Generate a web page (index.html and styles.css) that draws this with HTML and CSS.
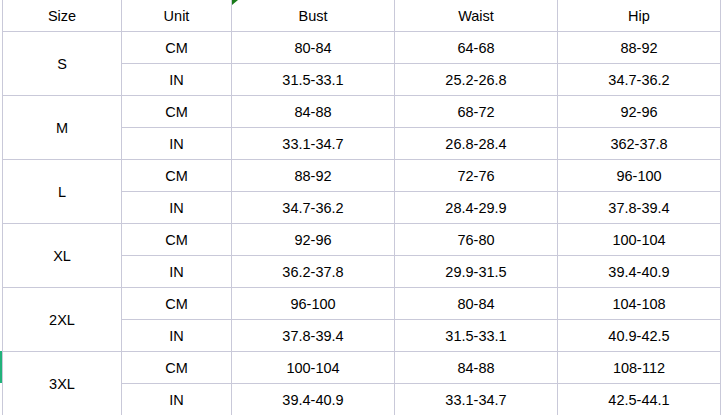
FILE: index.html
```html
<!DOCTYPE html>
<html>
<head>
<meta charset="utf-8">
<link rel="stylesheet" href="styles.css">
</head>
<body>
<div class="sheet">
  <div class="row-marker"></div>
  <table class="grid">
    <colgroup>
      <col class="c-size"><col class="c-unit"><col class="c-val"><col class="c-val"><col class="c-val">
    </colgroup>
    <tr class="head"><td>Size</td><td>Unit</td><td class="flagged">Bust<span class="flag"></span></td><td>Waist</td><td>Hip</td></tr>
    <tr><td rowspan="2">S</td><td>CM</td><td>80-84</td><td>64-68</td><td>88-92</td></tr>
    <tr><td>IN</td><td>31.5-33.1</td><td>25.2-26.8</td><td>34.7-36.2</td></tr>
    <tr><td rowspan="2">M</td><td>CM</td><td>84-88</td><td>68-72</td><td>92-96</td></tr>
    <tr><td>IN</td><td>33.1-34.7</td><td>26.8-28.4</td><td>362-37.8</td></tr>
    <tr><td rowspan="2">L</td><td>CM</td><td>88-92</td><td>72-76</td><td>96-100</td></tr>
    <tr><td>IN</td><td>34.7-36.2</td><td>28.4-29.9</td><td>37.8-39.4</td></tr>
    <tr><td rowspan="2">XL</td><td>CM</td><td>92-96</td><td>76-80</td><td>100-104</td></tr>
    <tr><td>IN</td><td>36.2-37.8</td><td>29.9-31.5</td><td>39.4-40.9</td></tr>
    <tr><td rowspan="2">2XL</td><td>CM</td><td>96-100</td><td>80-84</td><td>104-108</td></tr>
    <tr><td>IN</td><td>37.8-39.4</td><td>31.5-33.1</td><td>40.9-42.5</td></tr>
    <tr><td rowspan="2">3XL</td><td>CM</td><td>100-104</td><td>84-88</td><td>108-112</td></tr>
    <tr><td>IN</td><td>39.4-40.9</td><td>33.1-34.7</td><td>42.5-44.1</td></tr>
  </table>
</div>
</body>
</html>
```
FILE: styles.css
```css
html, body {
  margin: 0;
  padding: 0;
  background: #ffffff;
  overflow: hidden;
}
.sheet {
  position: relative;
  width: 721px;
  height: 415px;
  overflow: hidden;
  padding-left: 2px;
  box-sizing: border-box;
}
.row-marker {
  position: absolute;
  left: 0;
  top: 351px;
  width: 2px;
  height: 32px;
  background: #21b27a;
}
.grid {
  border-collapse: collapse;
  table-layout: fixed;
  width: 719px;
  margin-top: -1px;
  font-family: "Liberation Sans", Arial, sans-serif;
  font-size: 14.5px;
  color: #000000;
}
.c-size { width: 119px; }
.c-unit { width: 110px; }
.c-val { width: 163px; }
.grid td {
  border: 1px solid #c9c9d9;
  height: 31px;
  padding: 0;
  text-align: center;
  vertical-align: middle;
  box-sizing: border-box;
  white-space: nowrap;
}
.grid tr { height: 32px; }
.flagged { position: relative; }
.flag {
  position: absolute;
  left: 0;
  top: 0;
  width: 0;
  height: 0;
  border-top: 5px solid #1a7a1a;
  border-right: 6px solid transparent;
}
```
